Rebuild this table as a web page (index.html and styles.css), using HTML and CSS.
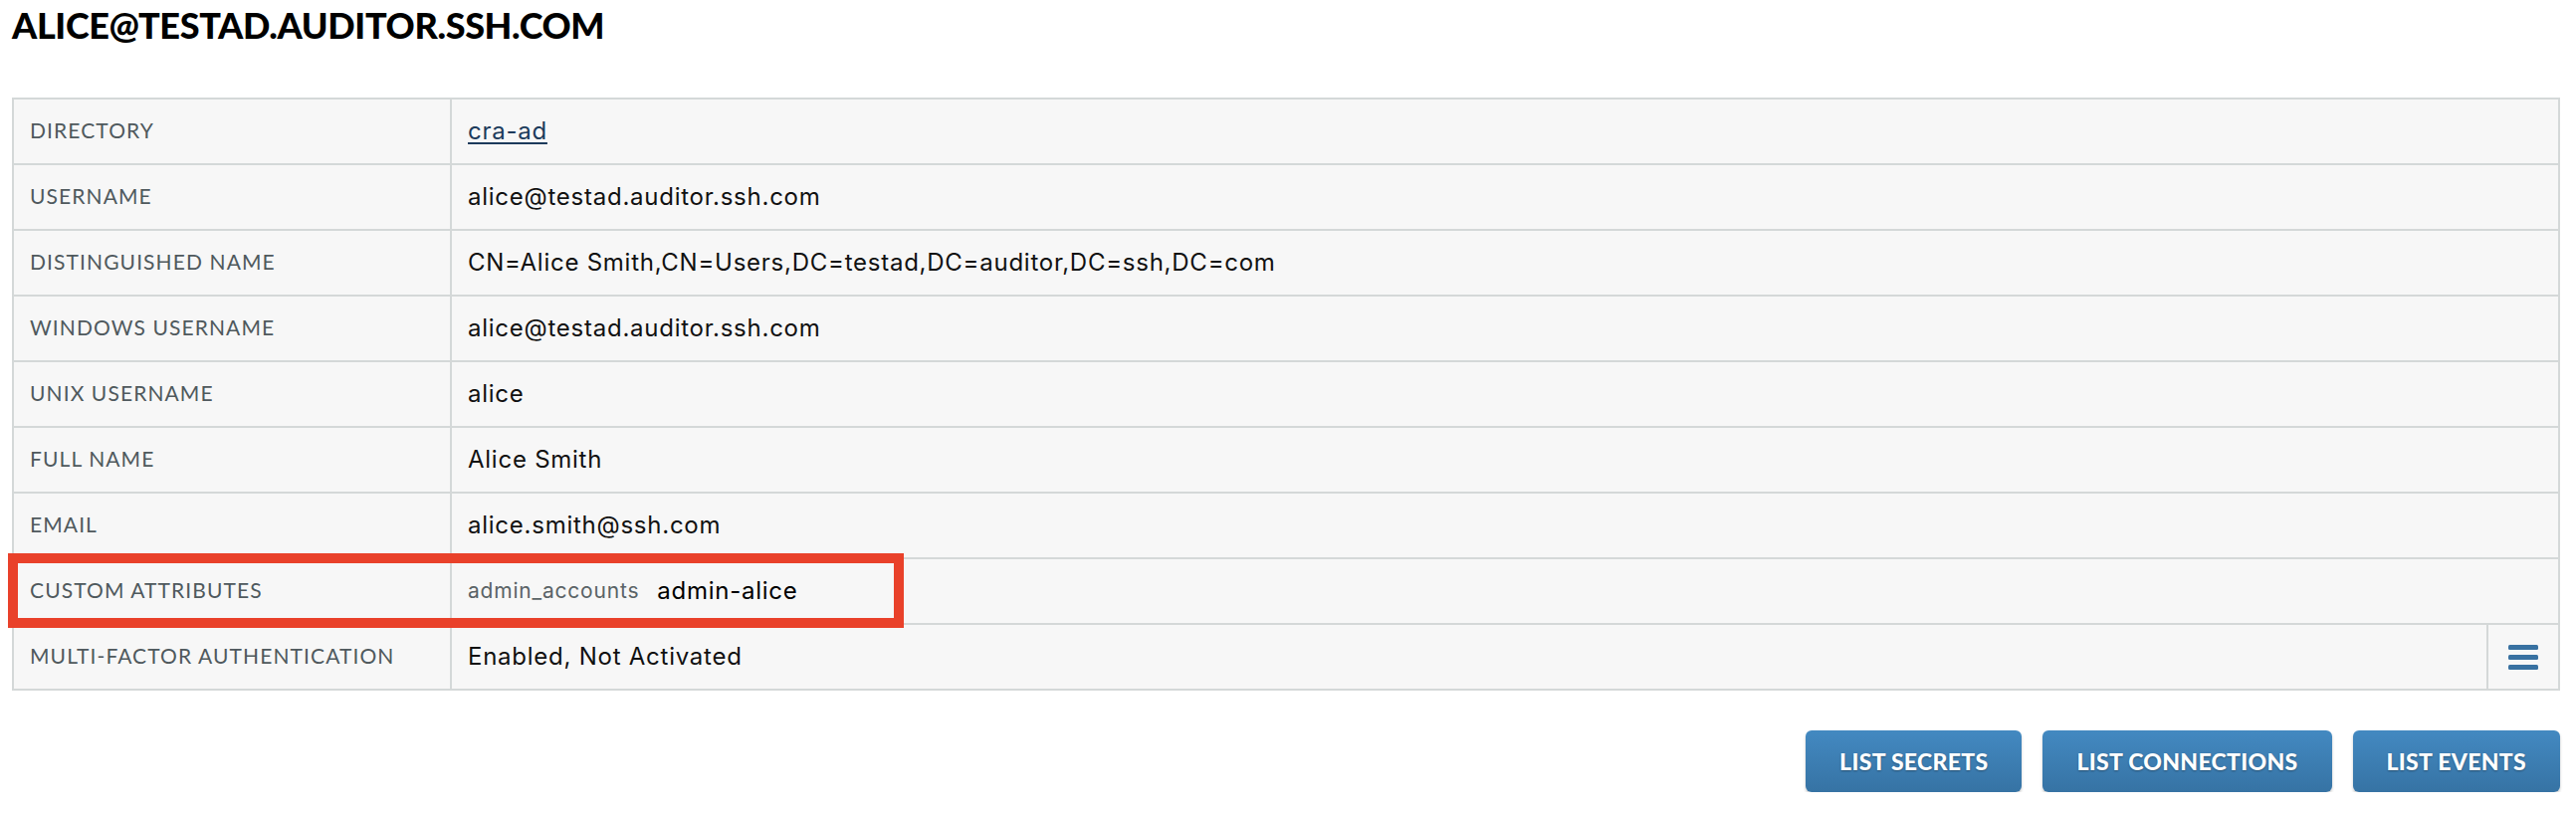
FILE: index.html
```html
<!DOCTYPE html>
<html lang="en">
<head>
<meta charset="utf-8">
<title>alice@testad.auditor.ssh.com</title>
<link rel="stylesheet" href="styles.css">
</head>
<body>
<div class="page">
  <h1 class="title">ALICE@TESTAD.AUDITOR.SSH.COM</h1>
  <div class="details">
    <div class="row"><div class="label">Directory</div><div class="value"><a class="link" href="#">cra-ad</a></div></div>
    <div class="row"><div class="label">Username</div><div class="value">alice@testad.auditor.ssh.com</div></div>
    <div class="row"><div class="label">Distinguished Name</div><div class="value">CN=Alice Smith,CN=Users,DC=testad,DC=auditor,DC=ssh,DC=com</div></div>
    <div class="row"><div class="label">Windows Username</div><div class="value">alice@testad.auditor.ssh.com</div></div>
    <div class="row"><div class="label">Unix Username</div><div class="value">alice</div></div>
    <div class="row"><div class="label">Full Name</div><div class="value">Alice Smith</div></div>
    <div class="row"><div class="label">Email</div><div class="value">alice.smith@ssh.com</div></div>
    <div class="row"><div class="label">Custom Attributes</div><div class="value"><span class="attr-key">admin_accounts</span><span class="attr-val">admin-alice</span></div></div>
    <div class="row row-menu"><div class="label">Multi-Factor Authentication</div><div class="value">Enabled, Not Activated</div>
      <div class="menu-cell"><svg class="menu-icon" width="30" height="25" viewBox="0 0 30 25"><rect x="0" y="0" width="30" height="5" rx="1.5"/><rect x="0" y="10" width="30" height="5" rx="1.5"/><rect x="0" y="20" width="30" height="5" rx="1.5"/></svg></div>
    </div>
    <div class="highlight"></div>
  </div>
  <div class="actions">
    <button class="btn">LIST SECRETS</button>
    <button class="btn">LIST CONNECTIONS</button>
    <button class="btn">LIST EVENTS</button>
  </div>
</div>
</body>
</html>
```

FILE: styles.css
```css
html, body {
  margin: 0;
  padding: 0;
  background: #ffffff;
}
body {
  font-family: "Lato", "Liberation Sans", sans-serif;
  color: #111;
}
.page {
  padding: 0 16px 0 12px;
}
.title {
  margin: 0 0 48px 0;
  font-size: 36px;
  line-height: 50px;
  font-weight: 900;
  color: #000;
  letter-spacing: -0.35px;
}
.details {
  position: relative;
  border: 2px solid #d4d8d8;
  border-bottom: none;
  background: #f7f7f7;
}
.row {
  display: grid;
  grid-template-columns: 440px 1fr;
  height: 66px;
  box-sizing: border-box;
  border-bottom: 2px solid #d4d8d8;
}
.row-menu {
  grid-template-columns: 440px 1fr 72px;
}
.label {
  display: flex;
  align-items: center;
  padding-left: 16px;
  padding-bottom: 3px;
  border-right: 2px solid #d4d8d8;
  font-size: 21px;
  letter-spacing: 1.1px;
  text-transform: uppercase;
  color: #4f595d;
}
.value {
  display: flex;
  align-items: center;
  padding-left: 16px;
  padding-bottom: 2px;
  font-family: "Inter", "Lato", sans-serif;
  font-size: 24px;
  letter-spacing: 0.75px;
  color: #111;
}
.link {
  color: #1d3b5c;
  text-decoration: underline;
  text-underline-offset: 3px;
}
.attr-key {
  font-size: 21px;
  letter-spacing: 0.8px;
  color: #5a6366;
  margin-right: 18px;
}
.attr-val {
  color: #000;
}
.menu-cell {
  display: flex;
  align-items: center;
  justify-content: center;
  border-left: 2px solid #d4d8d8;
}
.menu-icon {
  fill: #3871a1;
  display: block;
}
.highlight {
  position: absolute;
  left: -6px;
  top: 456px;
  width: 900px;
  height: 75px;
  box-sizing: border-box;
  border: 10px solid #e9412a;
  pointer-events: none;
}
.actions {
  display: flex;
  justify-content: flex-end;
  gap: 21px;
  margin-top: 40px;
}
.btn {
  height: 62px;
  padding: 0 34px;
  border: none;
  border-radius: 6px;
  background: linear-gradient(#4389c1, #3673a4);
  box-shadow: 0 2px 3px rgba(0, 0, 0, 0.22);
  color: #fff;
  font-family: "Lato", "Liberation Sans", sans-serif;
  font-weight: 900;
  font-size: 23px;
  letter-spacing: 0.3px;
  text-shadow: 0 1px 2px rgba(0, 0, 0, 0.35);
  cursor: pointer;
}
```
